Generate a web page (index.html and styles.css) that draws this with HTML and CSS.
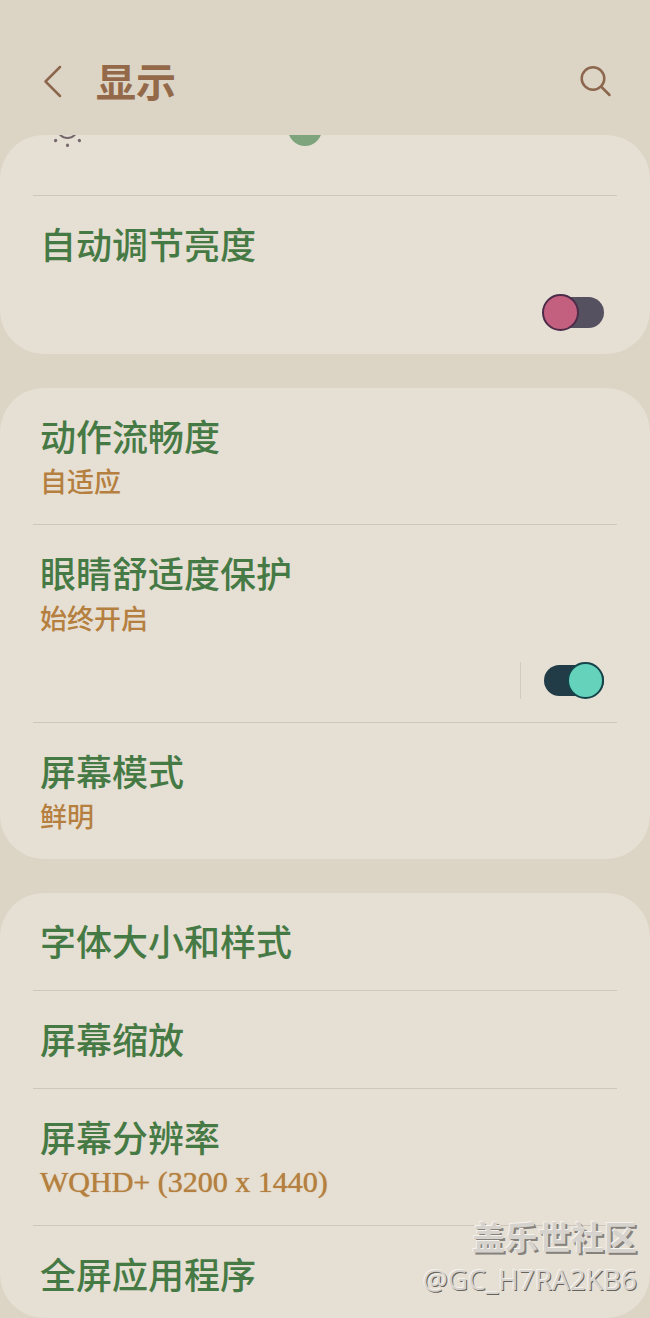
FILE: index.html
```
<!DOCTYPE html>
<html lang="zh-CN">
  <head>
    <meta charset="UTF-8" />
    <title>显示</title>
    <meta name="viewport" content="width=device-width, initial-scale=1.0">
    <link rel="stylesheet" href="styles.css">
  </head>
  <body>
    <div class="screen">
      <header class="top-bar">
        <button class="icon-button" aria-label="返回">
          <svg width="32" height="40" viewBox="0 0 32 40">
            <path d="M24 5 L9.5 19.5 L24 34" />
          </svg>
        </button>
        <h1>显示</h1>
        <button class="icon-button" aria-label="搜索">
          <svg width="40" height="40" viewBox="0 0 40 40">
            <circle cx="18" cy="16.5" r="11.3" />
            <path d="M26 24.5 L34.5 33" />
          </svg>
        </button>
      </header>

      <main class="settings">
        <section class="card">
          <div class="brightness">
            <svg class="sun" width="40" height="40" viewBox="0 0 40 40">
              <circle cx="20.5" cy="19" r="10" />
              <path d="M20.5 3v.5M20.5 36v.5M3.5 20h.5M37 20h.5M8.5 8l.2.2M32.3 31.4l.2.2M8.5 31.6l.2-.2M32.3 8.2l.2-.2" />
            </svg>
            <input type="range" min="0" max="100" step="any" value="40.4" aria-label="亮度">
          </div>
          <div class="row">
            <label class="title" for="auto-brightness">自动调节亮度</label>
            <div class="control">
              <input type="checkbox" class="toggle" id="auto-brightness">
            </div>
          </div>
        </section>

        <section class="card">
          <a class="row" href="#motion">
            <span class="title">动作流畅度</span>
            <span class="value">自适应</span>
          </a>
          <div class="row">
            <label class="title" for="eye-comfort">眼睛舒适度保护</label>
            <span class="value">始终开启</span>
            <div class="control split">
              <input type="checkbox" class="toggle" id="eye-comfort" checked>
            </div>
          </div>
          <a class="row" href="#mode">
            <span class="title">屏幕模式</span>
            <span class="value">鲜明</span>
          </a>
        </section>

        <section class="card">
          <a class="row" href="#font"><span class="title">字体大小和样式</span></a>
          <a class="row" href="#zoom"><span class="title">屏幕缩放</span></a>
          <a class="row" href="#resolution">
            <span class="title">屏幕分辨率</span>
            <span class="value latin">WQHD+ (3200 x 1440)</span>
          </a>
          <a class="row" href="#apps"><span class="title">全屏应用程序</span></a>
        </section>
      </main>

      <div class="watermark">
        <div class="community">盖乐世社区</div>
        <div class="user">@GC_H7RA2KB6</div>
      </div>
    </div>
  </body>
</html>
```
FILE: styles.css
```
* {
  box-sizing: border-box;
}
body {
  margin: 0;
  background-color: #dcd4c5;
  font-family: KaiTi, "Noto Sans CJK SC", sans-serif;
}
.screen {
  position: relative;
  display: flex;
  flex-direction: column;
  height: 100vh;
  overflow: hidden;
}

/* Top bar */
.top-bar {
  display: flex;
  align-items: center;
  flex: none;
  height: 135px;
  padding: 28px 35px 0 36px;
}
.top-bar h1 {
  flex: 1;
  margin: 0 0 4px 28px;
  font-size: 40px;
  line-height: 48px;
  font-weight: 700;
  color: #93694a;
}
.icon-button {
  padding: 0;
  border: none;
  background: none;
  cursor: pointer;
}
.icon-button svg {
  display: block;
  fill: none;
  stroke: #8c674d;
  stroke-width: 2.5;
  stroke-linecap: round;
  stroke-linejoin: round;
}

/* Cards */
.settings {
  flex: 1;
  min-height: 0;
  overflow-y: auto;
  scrollbar-width: none;
}
.card {
  margin-bottom: 34px;
  padding: 0 33px;
  border-radius: 44px;
  background-color: #e6dfd4;
  overflow: hidden;
}
.row {
  display: block;
  padding: 24px 13px 27px 7px;
  border-bottom: 1px solid #cfc6ba;
  color: inherit;
  text-decoration: none;
}
.row:last-child {
  border-bottom: none;
}
.card:last-child {
  margin-bottom: 0;
}
.card:last-child .row:last-child {
  padding-bottom: 22px;
}
.title {
  display: block;
  font-size: 36px;
  line-height: 46px;
  font-weight: 500;
  color: #467a45;
}
.value {
  display: block;
  margin: 3px 0 -3px;
  font-size: 27px;
  line-height: 39px;
  font-weight: 500;
  color: #b5803f;
}
.latin {
  font-family: "Liberation Serif", serif;
  font-size: 30px;
  text-shadow: 0 0 1px #b5803f;
}
.control {
  display: flex;
  justify-content: flex-end;
  margin: 28px 0 -4px;
}
.split::before {
  content: "";
  width: 1px;
  margin-right: 21px;
  background-color: #d2cabe;
}

/* Brightness slider, scrolled half under the top bar */
.brightness {
  display: flex;
  align-items: center;
  height: 97px;
  margin-top: -36px;
  padding: 0 12px 37px 14px;
  border-bottom: 1px solid #cfc6ba;
}
.sun {
  flex: none;
  fill: none;
  stroke: #76676c;
  stroke-width: 2;
  stroke-linecap: round;
}
.sun path {
  stroke-width: 3;
}
.brightness input {
  flex: 1;
  height: 34px;
  margin: 0 0 0 9px;
  appearance: none;
  background: linear-gradient(#b9c3ab, #b9c3ab) center / 100% 4px no-repeat;
}
.brightness input::-webkit-slider-thumb {
  appearance: none;
  width: 34px;
  height: 34px;
  border-radius: 50%;
  background-color: #7da47c;
}

/* Switches */
.toggle {
  position: relative;
  width: 62px;
  height: 37px;
  margin: 0;
  appearance: none;
  cursor: pointer;
}
.toggle::before,
.toggle::after {
  content: "";
  position: absolute;
}
.toggle::before {
  inset: 3px 0 3px 2px;
  border-radius: 16px;
  background-color: #565160;
}
.toggle::after {
  top: 0;
  left: 0;
  width: 37px;
  height: 37px;
  border: 2px solid #4c2c49;
  border-radius: 50%;
  box-sizing: border-box;
  background-color: #c4607f;
}
.toggle:checked::before {
  background-color: #213c47;
}
.toggle:checked::after {
  left: auto;
  right: 0;
  border-color: #15444a;
  background-color: #65d2bc;
}

.watermark {
  position: absolute;
  right: 13px;
  bottom: 19px;
  text-align: right;
  color: #d6d3ce;
  pointer-events: none;
}
.community {
  font-family: "Noto Sans CJK SC", sans-serif;
  font-size: 33px;
  line-height: 46px;
  font-weight: 700;
  text-shadow: -1px -1px 0 #f5f2ec, 2px 2px 0 #85817b;
}
.user {
  font-family: "Open Sans", "Noto Sans", sans-serif;
  font-size: 28px;
  line-height: 40px;
  text-shadow: -1px -1px 0 #f5f2ec, 1px 1px 0 #66625c;
}
```
